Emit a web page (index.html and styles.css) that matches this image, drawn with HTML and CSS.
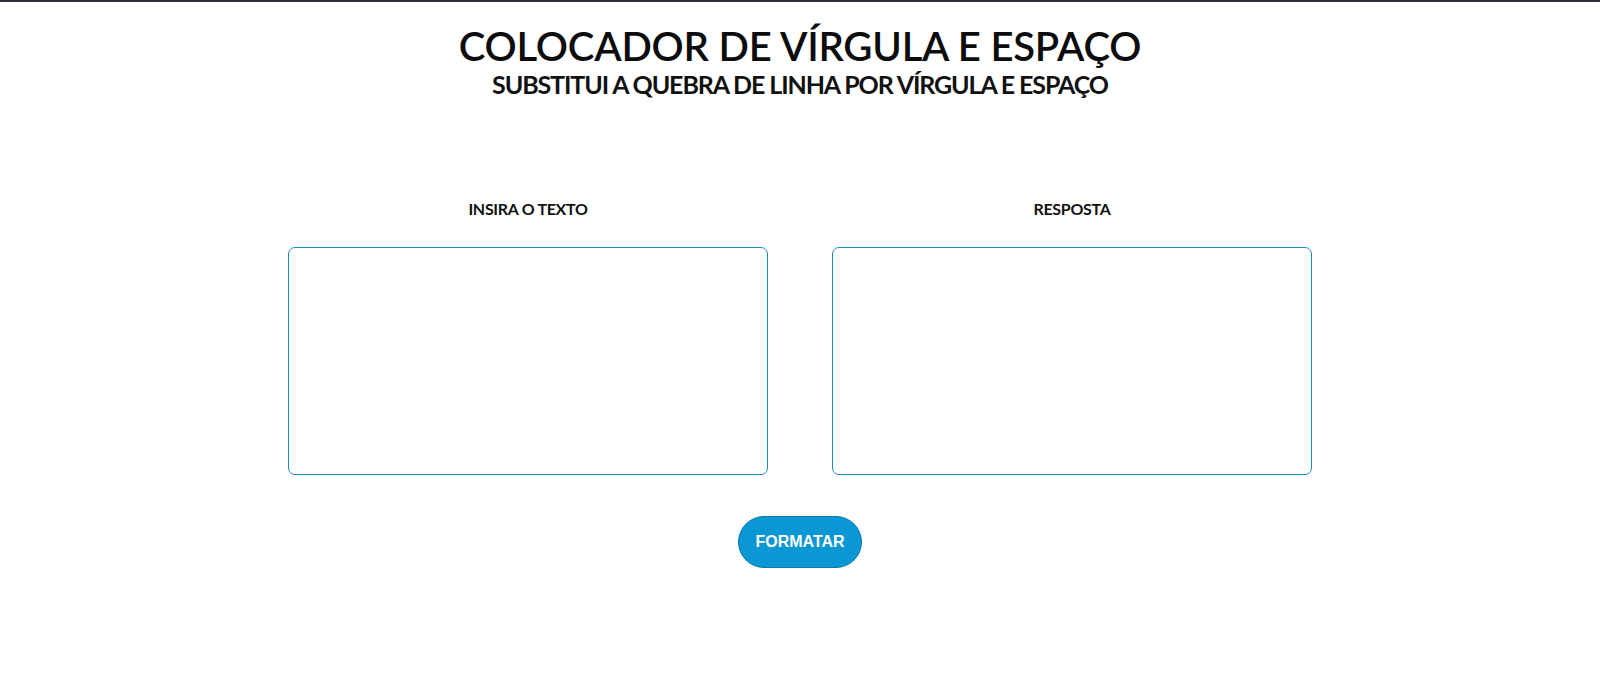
FILE: index.html
```html
<!DOCTYPE html>
<html lang="pt">
<head>
<meta charset="utf-8">
<title>Colocador de vírgula e espaço</title>
<link rel="stylesheet" href="styles.css">
</head>
<body>
<header class="header">
  <h1 class="title">COLOCADOR DE VÍRGULA E ESPAÇO</h1>
  <h2 class="subtitle">SUBSTITUI A QUEBRA DE LINHA POR VÍRGULA E ESPAÇO</h2>
</header>
<main class="main">
  <div class="panels">
    <div class="panel">
      <label class="label" for="entrada">INSIRA O TEXTO</label>
      <textarea id="entrada" class="box"></textarea>
    </div>
    <div class="panel">
      <label class="label" for="resposta">RESPOSTA</label>
      <textarea id="resposta" class="box"></textarea>
    </div>
  </div>
  <button class="button" type="button">FORMATAR</button>
</main>
</body>
</html>
```
FILE: styles.css
```css
html, body {
  margin: 0;
  padding: 0;
  background: #ffffff;
}
body {
  border-top: 2px solid #2d333b;
  font-family: Lato, "Noto Sans", sans-serif;
  color: #111111;
}
.header {
  display: flex;
  flex-direction: column;
  align-items: center;
  padding-top: 22px;
}
.title {
  margin: 0;
  font-size: 40px;
  font-weight: 600;
  letter-spacing: -0.2px;
  line-height: 44px;
  color: #0c0c0c;
}
.subtitle {
  margin: 0;
  margin-top: 2px;
  font-size: 25px;
  font-weight: 700;
  letter-spacing: -1.1px;
  line-height: 28px;
  color: #111111;
}
.main {
  display: flex;
  flex-direction: column;
  align-items: center;
  padding-top: 102px;
}
.panels {
  display: flex;
  gap: 64px;
}
.panel {
  display: flex;
  flex-direction: column;
  align-items: center;
  gap: 29px;
}
.label {
  font-size: 16px;
  font-weight: 700;
  letter-spacing: -0.3px;
  line-height: 18px;
}
.box {
  box-sizing: border-box;
  width: 480px;
  height: 228px;
  border: 1px solid #1b8cbc;
  border-radius: 7px;
  resize: none;
  outline: none;
  padding: 8px;
}
.button {
  margin-top: 41px;
  width: 124px;
  height: 52px;
  border: 1px solid #0a7cb0;
  border-radius: 26px;
  background: #0b97d4;
  color: #ffffff;
  font-family: "Liberation Sans", Arial, sans-serif;
  font-weight: 700;
  font-size: 16px;
  cursor: pointer;
}
```
